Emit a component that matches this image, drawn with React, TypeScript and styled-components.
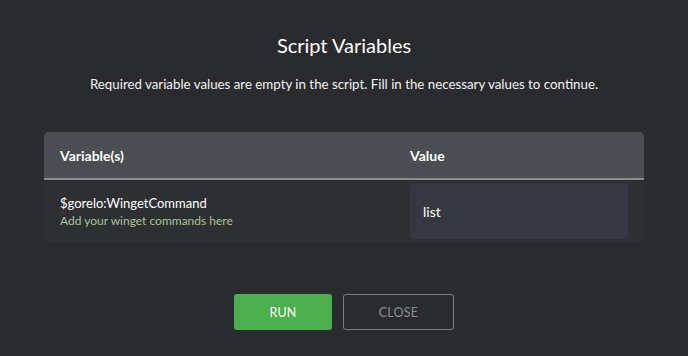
import React from 'react';
import styled, { createGlobalStyle } from 'styled-components';

const GlobalStyle = createGlobalStyle`
  html, body {
    margin: 0;
    padding: 0;
    background: #2a2b2f;
  }
  body {
    font-family: Lato, 'Noto Sans', sans-serif;
    color: #ffffff;
  }
`;

const Dialog = styled.div`
  width: 688px;
  height: 356px;
  box-sizing: border-box;
  padding-top: 33px;
  display: flex;
  flex-direction: column;
  align-items: center;
`;

const Title = styled.h2`
  margin: 0;
  font-size: 20px;
  font-weight: 400;
  line-height: 24px;
`;

const Subtitle = styled.p`
  margin: 17px 0 0;
  font-size: 13.3px;
  line-height: 20px;
  color: #f2f2f2;
`;

const Table = styled.div`
  margin-top: 38px;
  width: 600px;
  display: grid;
  grid-template-columns: 350px 250px;
  background: #2e2f33;
  border-radius: 5px 5px 0 0;
`;

const HeadCell = styled.div`
  height: 46px;
  padding: 0 16px;
  display: flex;
  align-items: center;
  background: #4a4d52;
  border-bottom: 2px solid #8a8c90;
  font-size: 14px;
  font-weight: 700;
  &:first-child {
    border-top-left-radius: 5px;
  }
  &:nth-child(2) {
    border-top-right-radius: 5px;
  }
`;

const Cell = styled.div`
  padding: 3px 16px;
  display: flex;
  flex-direction: column;
  justify-content: center;
  height: 62px;
  box-sizing: border-box;
`;

const VarName = styled.div`
  font-size: 13px;
  line-height: 18px;
`;

const VarHint = styled.div`
  margin-top: 1px;
  font-size: 12px;
  line-height: 16px;
  color: #a9c493;
`;

const ValueBox = styled.div`
  height: 56px;
  box-sizing: border-box;
  padding: 0 13px;
  display: flex;
  align-items: center;
  background: #363841;
  border-radius: 4px;
  font-size: 14px;
`;

const Actions = styled.div`
  margin-top: 52px;
  display: flex;
  gap: 11px;
`;

const Button = styled.button<{ $primary?: boolean }>`
  height: 36px;
  width: ${(p) => (p.$primary ? '98px' : '111px')};
  box-sizing: border-box;
  border-radius: 3px;
  font-family: Lato, 'Noto Sans', sans-serif;
  font-size: 12.5px;
  letter-spacing: 0.2px;
  cursor: pointer;
  background: ${(p) => (p.$primary ? '#4caf50' : 'transparent')};
  color: ${(p) => (p.$primary ? '#ffffff' : '#8b8d91')};
  border: ${(p) => (p.$primary ? 'none' : '1px solid #7d7f83')};
`;

const App: React.FC = () => {
  return (
    <>
      <GlobalStyle />
      <Dialog>
        <Title>Script Variables</Title>
        <Subtitle>
          Required variable values are empty in the script. Fill in the necessary values to continue.
        </Subtitle>
        <Table>
          <HeadCell>Variable(s)</HeadCell>
          <HeadCell>Value</HeadCell>
          <Cell>
            <VarName>$gorelo:WingetCommand</VarName>
            <VarHint>Add your winget commands here</VarHint>
          </Cell>
          <Cell>
            <ValueBox>list</ValueBox>
          </Cell>
        </Table>
        <Actions>
          <Button $primary>RUN</Button>
          <Button>CLOSE</Button>
        </Actions>
      </Dialog>
    </>
  );
};

export default App;
